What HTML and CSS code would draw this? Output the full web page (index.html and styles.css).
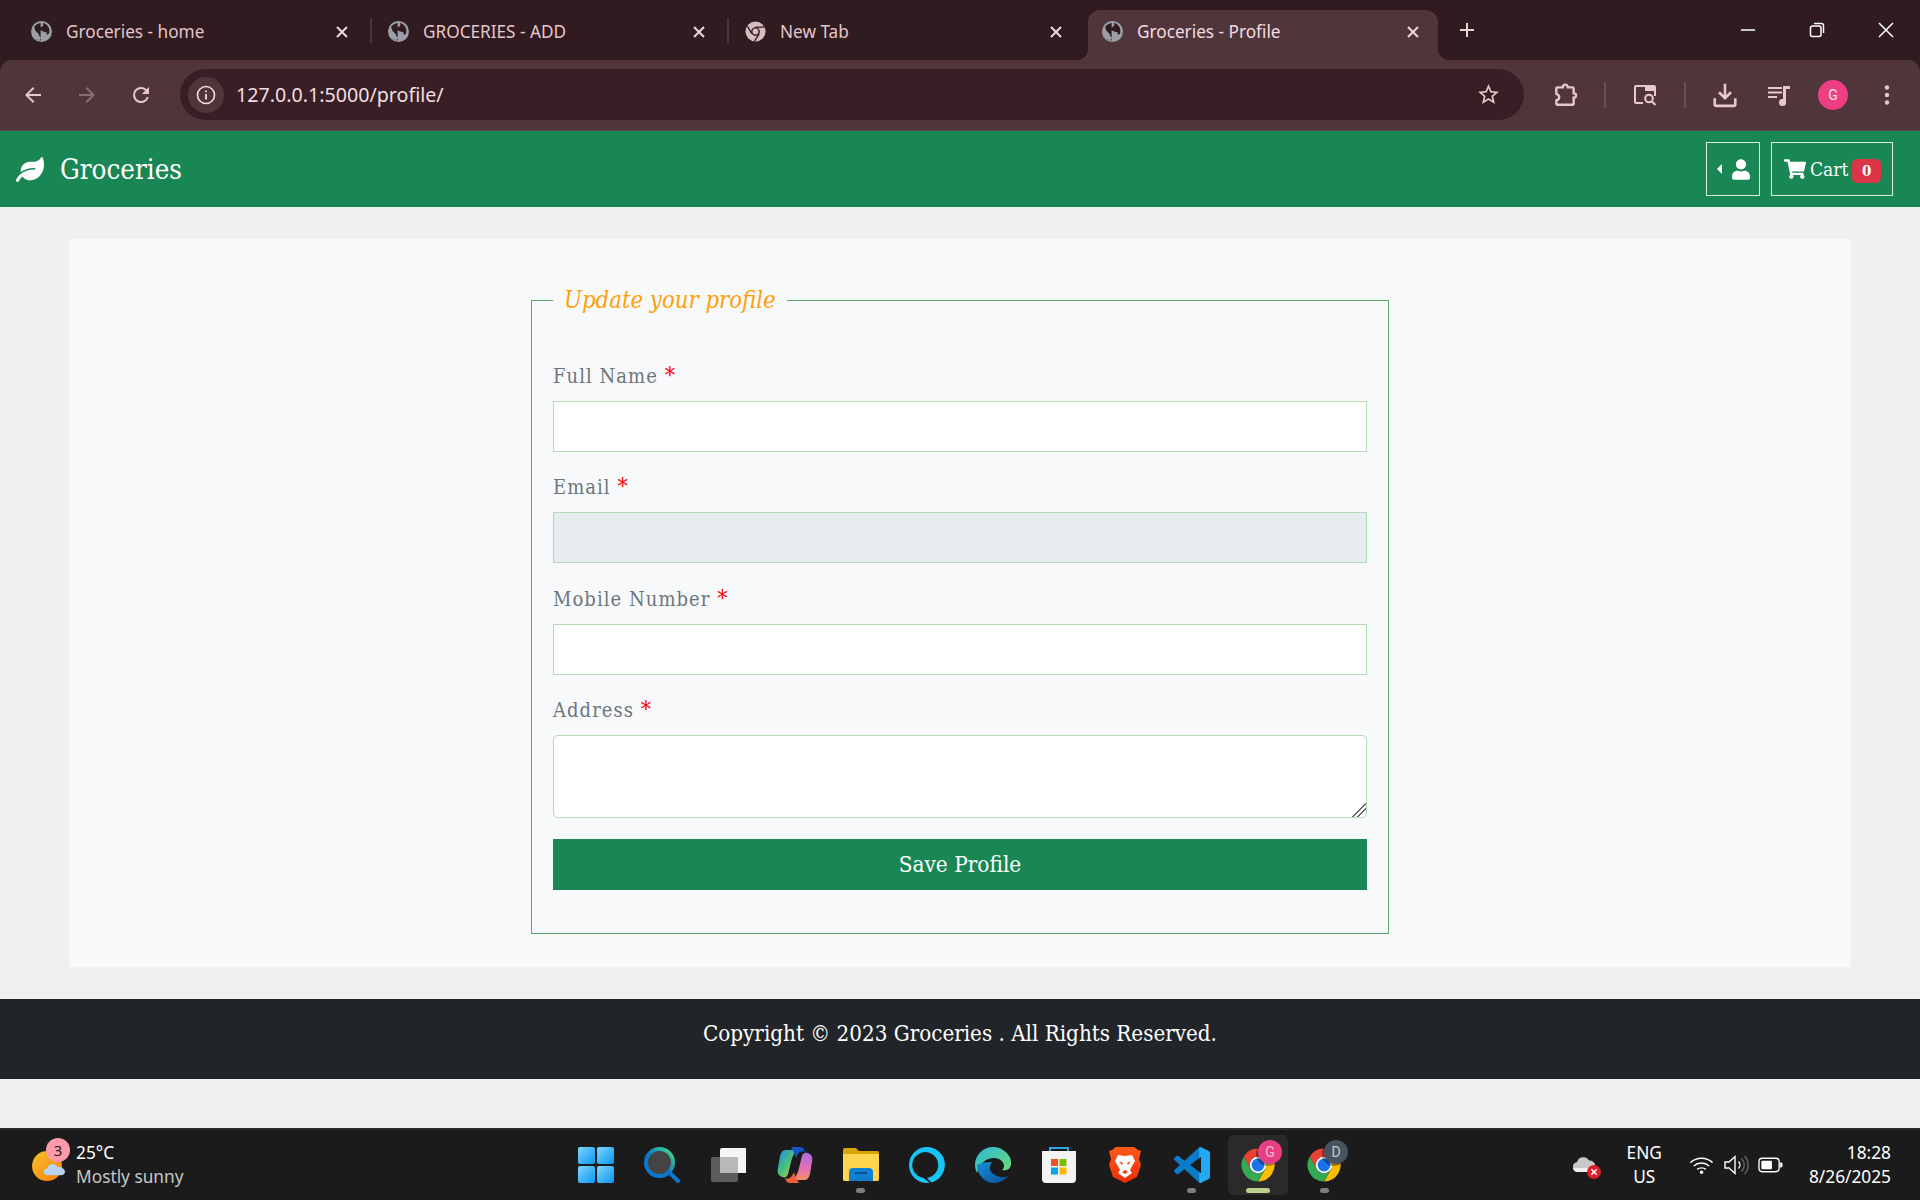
FILE: index.html
```html
<!DOCTYPE html>
<html lang="en">
<head>
<meta charset="utf-8">
<title>Groceries - Profile</title>
<link rel="stylesheet" href="styles.css">
</head>
<body>
<svg class="defs" aria-hidden="true">
  <defs>
    <symbol id="globe" viewBox="0 0 24 24">
      <circle cx="12" cy="12" r="12" fill="#9aa0a6"/>
      <path d="M11 2.200C8 2.600 5.200 4.200 3.600 6.600L5 11l4 4v1.500l2 2.500 .5 3c-4.500 0-7-2-7-2 4 3.500 6.500 .5 6.500 .5zM14 2.500v3l-3 2v3l3 1.500 4 1v3l2.500-1.500c1.500-4.500 0-10-6.500-12.500z" fill="#2f1b20"/>
    </symbol>
    <symbol id="close" viewBox="0 0 12 12"><path d="M1 1l10 10M11 1L1 11" stroke="#f0d8dc" stroke-width="2"/></symbol>
    <symbol id="chrome" viewBox="0 0 24 24">
      <path d="M2.470 6.500A11 11 0 0 1 21.530 6.500H12A5.500 5.500 0 0 0 7.240 14.750Z" fill="#ea4335"/>
      <path d="M21.530 6.500A11 11 0 0 1 12 23L16.760 14.750A5.500 5.500 0 0 0 12 6.500Z" fill="#fbbc04"/>
      <path d="M12 23A11 11 0 0 1 2.470 6.500L7.240 14.750A5.500 5.500 0 0 0 16.760 14.750Z" fill="#34a853"/>
      <circle cx="12" cy="12" r="5.500" fill="#fff"/>
      <circle cx="12" cy="12" r="4.300" fill="#1a73e8"/>
    </symbol>
    <linearGradient id="winGrad" x1="0" y1="0" x2="1" y2="1"><stop offset="0" stop-color="#7fd6ff"/><stop offset="1" stop-color="#0a96f0"/></linearGradient>
    <linearGradient id="searchGrad" x1="0" y1="1" x2="1" y2="0"><stop offset=".45" stop-color="#0a78d0"/><stop offset=".8" stop-color="#2fb9a0"/><stop offset="1" stop-color="#6fe07a"/></linearGradient>
    <linearGradient id="coA" x1="0" y1="0" x2="1" y2="1"><stop offset="0" stop-color="#1c8cf0"/><stop offset=".5" stop-color="#4bc27a"/><stop offset="1" stop-color="#f7c92e"/></linearGradient>
    <linearGradient id="coB" x1="0" y1="0" x2="0" y2="1"><stop offset="0" stop-color="#b06be0"/><stop offset=".6" stop-color="#e56fb0"/><stop offset="1" stop-color="#f59060"/></linearGradient>
    <linearGradient id="edgeA" x1="0" y1="0" x2="1" y2="1"><stop offset="0" stop-color="#29b8e0"/><stop offset="1" stop-color="#6fdc6a"/></linearGradient>
    <linearGradient id="edgeB" x1="0" y1="0" x2="1" y2="1"><stop offset="0" stop-color="#1690d8"/><stop offset="1" stop-color="#0a4f96"/></linearGradient>
    <linearGradient id="vs" x1="0" y1="0" x2="1" y2="0"><stop offset=".7" stop-color="#0a7bc8"/><stop offset=".71" stop-color="#23a8f2"/></linearGradient>
    <linearGradient id="sun" x1="0" y1="0" x2="1" y2="1"><stop offset="0" stop-color="#f5c42c"/><stop offset="1" stop-color="#f97a08"/></linearGradient>
    <linearGradient id="brave" x1="0" y1="0" x2="0" y2="1"><stop offset="0" stop-color="#ff5a1a"/><stop offset="1" stop-color="#f02c06"/></linearGradient>
  </defs>
</svg>

<div class="browser">
  <div class="tabstrip">
    <div class="tab sep">
      <svg class="favicon"><use href="#globe"/></svg>
      <span class="tab-title">Groceries - home</span>
      <svg class="tab-close"><use href="#close"/></svg>
    </div>
    <div class="tab sep">
      <svg class="favicon"><use href="#globe"/></svg>
      <span class="tab-title">GROCERIES - ADD</span>
      <svg class="tab-close"><use href="#close"/></svg>
    </div>
    <div class="tab">
      <svg class="favicon" viewBox="0 0 24 24"><circle cx="12" cy="12" r="11.500" fill="#d9bcc2"/><circle cx="12" cy="12" r="5" fill="#2f1b20"/><circle cx="12" cy="12" r="3.400" fill="#d9bcc2"/><path d="M12 7h10M7.700 14.500L2.800 6M16.300 14.500L11 23" stroke="#2f1b20" stroke-width="1.500"/></svg>
      <span class="tab-title">New Tab</span>
      <svg class="tab-close"><use href="#close"/></svg>
    </div>
    <div class="tab active">
      <svg class="favicon"><use href="#globe"/></svg>
      <span class="tab-title">Groceries - Profile</span>
      <svg class="tab-close"><use href="#close"/></svg>
    </div>
    <svg class="newtab" viewBox="0 0 16 16"><path d="M8 1v14M1 8h14" stroke="#ecd0d5" stroke-width="2"/></svg>
    <div class="winctl">
      <svg class="winbtn" viewBox="0 0 16 16"><path d="M1 8h14" stroke="#fff" stroke-width="1.500"/></svg>
      <svg class="winbtn" viewBox="0 0 16 16"><rect x="1.500" y="4" width="10.500" height="10.500" rx="2" fill="none" stroke="#fff" stroke-width="1.500"/><path d="M5 1.500h7.500a2 2 0 0 1 2 2V11" fill="none" stroke="#fff" stroke-width="1.500"/></svg>
      <svg class="winbtn" viewBox="0 0 16 16"><path d="M1 1l14 14M15 1L1 15" stroke="#fff" stroke-width="1.500"/></svg>
    </div>
  </div>

  <div class="toolbar">
    <button class="tool" type="button"><svg class="ticon" viewBox="0 0 24 24"><path d="M20 11H7.830l5.590-5.590L12 4l-8 8 8 8 1.410-1.410L7.830 13H20z"/></svg></button>
    <button class="tool dim" type="button"><svg class="ticon" viewBox="0 0 24 24"><path d="M12 4l-1.410 1.410L16.170 11H4v2h12.170l-5.580 5.590L12 20l8-8z"/></svg></button>
    <button class="tool" type="button"><svg class="ticon" viewBox="0 0 24 24"><path d="M17.650 6.350A7.960 7.960 0 0 0 12 4a8 8 0 1 0 7.750 10h-2.080A6 6 0 1 1 12 6c1.660 0 3.140.69 4.220 1.780L13 11h7V4l-2.350 2.350z"/></svg></button>
    <div class="omnibox">
      <span class="site-info"><svg class="info" viewBox="0 0 20 20"><circle cx="10" cy="10" r="8.500" fill="none" stroke="#f3dde1" stroke-width="1.600"/><path d="M10 9v5.500M10 5.500v1.800" stroke="#f3dde1" stroke-width="1.800"/></svg></span>
      <span class="url">127.0.0.1:5000/profile/</span>
      <svg class="star" viewBox="0 0 24 24"><path d="M22 9.240l-7.190-.62L12 2 9.190 8.630 2 9.240l5.460 4.730L5.820 21 12 17.270 18.180 21l-1.630-7.030L22 9.240zM12 15.400l-3.760 2.270 1-4.280-3.320-2.880 4.380-.38L12 6.100l1.710 4.040 4.380.38-3.320 2.880 1 4.280L12 15.400z"/></svg>
    </div>
    <div class="tool first"><svg class="ticon big" viewBox="0 0 24 24"><path d="M5 5h5c0-3.500 4.500-3.500 4.500 0H19a1 1 0 0 1 1 1v4.500c3-.5 3 4.500 0 4V20a1 1 0 0 1-1 1H5a1 1 0 0 1-1-1v-3c3.500-1 3.500-5 0-6V6a1 1 0 0 1 1-1z" fill="none" stroke="#e8c7cd" stroke-width="2.200"/></svg></div>
    <span class="tsep"></span>
    <div class="tool"><svg class="ticon big" viewBox="0 0 26 24"><path d="M14 3H4a1 1 0 0 0-1 1v15a1 1 0 0 0 1 1h7" fill="none" stroke="#e8c7cd" stroke-width="2"/><path d="M13 2h9a2 2 0 0 1 2 2v4H13z"/><path d="M14 4h9M23 8v5" stroke="#e8c7cd" stroke-width="2"/><circle cx="17" cy="15.500" r="3.800" fill="none" stroke="#e8c7cd" stroke-width="2"/><path d="M20 18.500l3.500 3.500" stroke="#e8c7cd" stroke-width="2"/></svg></div>
    <span class="tsep"></span>
    <div class="tool"><svg class="ticon big" viewBox="0 0 24 24"><path d="M12 1.500v13M6.500 9.500L12 15l5.500-5.500" fill="none" stroke="#e8c7cd" stroke-width="2.400"/><path d="M2.500 15v5.500a1.500 1.500 0 0 0 1.500 1.500h16a1.500 1.500 0 0 0 1.500-1.500V15" fill="none" stroke="#e8c7cd" stroke-width="2.400"/></svg></div>
    <div class="tool"><svg class="ticon" viewBox="0 0 24 24"><path d="M1 4h14v2H1zM1 8.500h14v2H1zM1 13h9v2H1z"/><path d="M16 3h7v3h-4v13.500a3.500 3.500 0 1 1-3-3.400z"/></svg></div>
    <div class="tool"><span class="avatar">G</span></div>
    <div class="tool"><svg class="ticon" viewBox="0 0 24 24"><circle cx="12" cy="4.500" r="2.200"/><circle cx="12" cy="12" r="2.200"/><circle cx="12" cy="19.500" r="2.200"/></svg></div>
  </div>
</div>

<nav class="navbar">
  <a class="brand">
    <svg class="leaf" viewBox="0 0 576 512"><path d="M546.2 9.7c-5.600-12.500-21.600-13-28.300-1.200C486.900 62.400 431.400 96 368 96h-80C182 96 96 182 96 288c0 7 .8 13.700 1.500 20.500C161.300 262.800 253.400 224 384 224c8.800 0 16 7.200 16 16s-7.200 16-16 16C132.600 256 26 410.100 2.400 468c-6.600 16.300 1.200 34.900 17.500 41.600 16.400 6.800 35-1.100 41.800-17.300 1.500-3.600 20.900-47.900 71.900-90.600 32.400 43.900 94 85.800 174.900 77.200C465.500 467.500 576 326.700 576 154.300c0-50.200-10.800-102.200-29.800-144.600z"/></svg>
    <span>Groceries</span>
  </a>
  <div class="nav-actions">
    <button class="nav-btn user" type="button">
      <span class="caret"></span>
      <svg class="user-ico" viewBox="0 0 448 512"><path d="M224 256c70.700 0 128-57.300 128-128S294.700 0 224 0 96 57.300 96 128s57.300 128 128 128zm89.600 32h-16.700c-22.200 10.200-46.900 16-72.900 16s-50.600-5.800-72.900-16h-16.700C60.200 288 0 348.200 0 422.400V464c0 26.500 21.500 48 48 48h352c26.500 0 48-21.500 48-48v-41.600c0-74.200-60.200-134.400-134.400-134.400z"/></svg>
    </button>
    <button class="nav-btn cart" type="button">
      <svg class="cart-ico" viewBox="0 0 576 512"><path d="M528.120 301.319l47.273-208C578.806 78.301 567.391 64 551.990 64H159.208l-9.166-44.810C147.758 8.021 137.930 0 126.529 0H24C10.745 0 0 10.745 0 24v16c0 13.255 10.745 24 24 24h69.883l70.248 343.435C147.325 417.100 136 435.222 136 456c0 30.928 25.072 56 56 56s56-25.072 56-56c0-15.674-6.447-29.835-16.824-40h209.647C430.447 426.165 424 440.326 424 456c0 30.928 25.072 56 56 56s56-25.072 56-56c0-22.172-12.888-41.332-31.579-50.405l5.517-24.276c3.413-15.018-8.002-29.319-23.403-29.319H218.117l-6.545-32h293.145c11.206 0 20.920-7.754 23.403-18.681z"/></svg>
      <span class="cart-label">Cart</span>
      <span class="badge">0</span>
    </button>
  </div>
</nav>

<main class="page">
  <section class="card">
    <form class="profile-form">
      <fieldset class="fieldset">
        <legend class="legend">Update your profile</legend>
        <div class="group">
          <label class="label">Full Name <span class="req">*</span></label>
          <input class="input" type="text">
        </div>
        <div class="group">
          <label class="label">Email <span class="req">*</span></label>
          <input class="input" type="text" disabled>
        </div>
        <div class="group">
          <label class="label">Mobile Number <span class="req">*</span></label>
          <input class="input" type="text">
        </div>
        <div class="group">
          <label class="label">Address <span class="req">*</span></label>
          <textarea class="input area"></textarea>
        </div>
        <button class="save" type="button">Save Profile</button>
      </fieldset>
    </form>
  </section>
</main>

<footer class="footer">Copyright © 2023 Groceries . All Rights Reserved.</footer>

<div class="taskbar">
  <div class="weather">
    <span class="weather-icon">
      <svg class="sun" viewBox="0 0 34 32"><circle cx="15.500" cy="15.500" r="15.500" fill="url(#sun)"/><path d="M16 25a3.500 3.500 0 0 1-.5-7 6 6 0 0 1 11-1.500c4-.5 7.500 2 7.500 5 0 2-1.500 3.500-4 3.500z" fill="#b9d3f5"/></svg>
      <span class="notif">3</span>
    </span>
    <div class="two-line">
      <span class="temp">25°C</span>
      <span class="cond">Mostly sunny</span>
    </div>
  </div>

  <div class="apps">
    <div class="app"><svg class="app-ico" viewBox="0 0 36 36"><rect x="0" y="0" width="17" height="17" rx="2" fill="url(#winGrad)"/><rect x="19" y="0" width="17" height="17" rx="2" fill="url(#winGrad)"/><rect x="0" y="19" width="17" height="17" rx="2" fill="url(#winGrad)"/><rect x="19" y="19" width="17" height="17" rx="2" fill="url(#winGrad)"/></svg></div>
    <div class="app"><svg class="app-ico" viewBox="0 0 36 36"><circle cx="15.500" cy="15.500" r="13.500" fill="#444" stroke="url(#searchGrad)" stroke-width="4"/><path d="M25 25l9 9" stroke="#0a78d0" stroke-width="4" stroke-linecap="round"/></svg></div>
    <div class="app"><svg class="app-ico" viewBox="0 0 36 36"><rect x="1" y="10" width="27" height="25" rx="2" fill="#5c5c5c"/><rect x="10" y="1" width="27" height="25" rx="2" fill="#f4f4f4"/><rect x="10" y="10" width="18" height="16" fill="#b9b9b9"/></svg></div>
    <div class="app"><svg class="app-ico" viewBox="0 0 36 36"><path d="M8 3h13c-3 1-5 5-7 12l-3 12c-1 3-3 4-6 3-4-2-5-4-4-9l2-12c1-4 3-6 5-6z" fill="url(#coA)"/><path d="M28 33H15c3-1 5-5 7-12l3-12c1-3 3-4 6-3 4 2 5 4 4 9l-2 12c-1 4-3 6-5 6z" fill="url(#coB)"/><path d="M14 0h9c3 0 4 2 5 5-4-2-7 1-9 6-1-4-3-8-5-11z" fill="#1358c8"/><path d="M22 36h-9c-3 0-4-2-5-5 4 2 7-1 9-6 1 4 3 8 5 11z" fill="#f0603c"/></svg></div>
    <div class="app running"><svg class="app-ico" viewBox="0 0 36 36"><path d="M0 3a2 2 0 0 1 2-2h11l3 3h18a2 2 0 0 1 2 2v26a2 2 0 0 1-2 2H2a2 2 0 0 1-2-2z" fill="#d9a406"/><path d="M0 7h36v25a2 2 0 0 1-2 2H2a2 2 0 0 1-2-2z" fill="#ffd44f"/><path d="M6 34V25a4 4 0 0 1 4-4h16a4 4 0 0 1 4 4v9z" fill="#0f7fd0"/><path d="M12 26h12" stroke="#0a4f96" stroke-width="2"/></svg></div>
    <div class="app"><svg class="app-ico" viewBox="0 0 36 36"><path d="M18 0a18 18 0 1 0 0 36c1 0 1.500-.1 2.500-.2L14.500 31A13 13 0 1 1 18 31l4.500 4.400A18 18 0 0 0 18 0z" fill="#17c5f4"/></svg></div>
    <div class="app"><svg class="app-ico" viewBox="0 0 36 36"><path d="M18 0C8 0 0 8 0 18c0 3 1 6 2 8 2-9 9-15 17-15 6 0 10 4 10 8 0 2-1 3-2 4 3 1 8 0 9-5v-3C36 8 28 0 18 0z" fill="url(#edgeA)"/><path d="M2 18c0 10 8 18 17 18 6 0 11-3 14-7-2 1-8 2-13-1-5-2-7-8-3-13-6 0-13 1-15 3z" fill="url(#edgeB)"/></svg></div>
    <div class="app"><svg class="app-ico" viewBox="0 0 36 36"><path d="M9 6V1h18v5" fill="none" stroke="#2aa9ea" stroke-width="2"/><path d="M1 4h34v28a4 4 0 0 1-4 4H5a4 4 0 0 1-4-4z" fill="#f3f3f3"/><rect x="10" y="12" width="7" height="7" fill="#f25022"/><rect x="18.500" y="12" width="7" height="7" fill="#7fba00"/><rect x="10" y="20.500" width="7" height="7" fill="#00a4ef"/><rect x="18.500" y="20.500" width="7" height="7" fill="#ffb900"/></svg></div>
    <div class="app"><svg class="app-ico" viewBox="0 0 36 36"><path d="M9 0h18l4 3 3 1-2 8 2 6-4 12-12 6-12-6-4-12 2-6-2-8 3-1z" fill="url(#brave)"/><path d="M11 8l7 1 7-1 3 6-3 5-2 4 2 3-7 5-7-5 2-3-2-4-3-5z" fill="#fff"/><path d="M12 14l4 2-1 2zM24 14l-4 2 1 2zM15 25l3-2 3 2-3 2z" fill="#f03a0a"/></svg></div>
    <div class="app running"><svg class="app-ico" viewBox="0 0 24 24"><path fill="url(#vs)" d="M23.150 2.587L18.210.21a1.494 1.494 0 0 0-1.705.29l-9.460 8.630-4.120-3.128a.999.999 0 0 0-1.276.057L.327 7.261A1 1 0 0 0 .326 8.740L3.899 12 .326 15.260a1 1 0 0 0 .001 1.479L1.650 17.940a.999.999 0 0 0 1.276.057l4.120-3.128 9.460 8.630a1.492 1.492 0 0 0 1.704.29l4.942-2.377A1.500 1.500 0 0 0 24 20.060V3.939a1.500 1.500 0 0 0-.85-1.352zm-5.146 14.861L10.826 12l7.178-5.448v10.896z"/></svg></div>
    <div class="app active-app"><svg class="app-ico"><use href="#chrome"/></svg><span class="profile pink">G</span></div>
    <div class="app running"><svg class="app-ico"><use href="#chrome"/></svg><span class="profile slate">D</span></div>
  </div>

  <div class="tray">
    <span class="cloud">
      <svg class="cloud-ico" viewBox="0 0 24 24"><path d="M6 19a5 5 0 0 1-1-9.900A6.500 6.500 0 0 1 17 7.500 5.500 5.500 0 0 1 18 19z" fill="#c9c9c9"/><path d="M1 15h20v4H6a5 5 0 0 1-5-4z" fill="#f1f1f1"/></svg>
      <svg class="err" viewBox="0 0 14 14"><circle cx="7" cy="7" r="7" fill="#d9202c"/><path d="M4.300 4.300l5.400 5.400M9.700 4.300l-5.400 5.400" stroke="#fff" stroke-width="1.600"/></svg>
    </span>
    <div class="two-line lang"><span>ENG</span><span>US</span></div>
    <svg class="sys wifi" viewBox="0 0 26 20"><path d="M1.500 7.500c6.500-6 16.500-6 23 0M5 11c4.500-4 11.500-4 16 0M8.500 14.500c2.500-2 6.500-2 9 0" fill="none" stroke="#fff" stroke-width="1.500"/><circle cx="13" cy="17.500" r="1.800" fill="#fff"/></svg>
    <svg class="sys vol" viewBox="0 0 26 22"><path d="M1 8h4l6-5.500v17L5 14H1z" fill="none" stroke="#fff" stroke-width="1.400"/><path d="M14.500 7.500a5 5 0 0 1 0 7" fill="none" stroke="#fff" stroke-width="1.400"/><path d="M17.500 4.500a9 9 0 0 1 0 13M20.500 2a13 13 0 0 1 0 18" fill="none" stroke="#666" stroke-width="1.400"/></svg>
    <svg class="sys batt" viewBox="0 0 26 18"><rect x="1" y="2" width="21" height="14" rx="3.500" fill="none" stroke="#fff" stroke-width="1.400"/><rect x="3.500" y="4.500" width="11" height="9" rx="1" fill="#fff"/><path d="M23 6.500h1a1.500 1.500 0 0 1 1.500 1.500v2a1.500 1.500 0 0 1-1.500 1.500h-1z" fill="#fff"/></svg>
    <div class="two-line clock"><span>18:28</span><span>8/26/2025</span></div>
  </div>
</div>
</body>
</html>
```

FILE: styles.css
```css
* { box-sizing: border-box; }
html, body { margin: 0; height: 1200px; overflow: hidden; }
body {
  position: relative;
  display: flex;
  flex-direction: column;
  background: #f0f0f0;
  font-family: "DejaVu Serif Condensed", "DejaVu Serif", serif;
}
.defs { position: absolute; width: 0; height: 0; }

/* browser chrome */
.browser { font-family: "Noto Sans", "Open Sans", sans-serif; background: #2f1b20; }
.tabstrip { display: flex; height: 60px; padding: 10px 0 0 17px; color: #e6c6cc; }
.tab {
  position: relative;
  flex: none;
  display: flex;
  align-items: center;
  width: 350px;
  margin-right: 7px;
  padding: 0 19px 7px 14px;
  font-size: 17.2px;
  border-radius: 12px 12px 0 0;
}
.tab.sep::after {
  content: "";
  position: absolute;
  right: -5px;
  top: 8px;
  width: 2px;
  height: 25px;
  background: #4f353b;
}
.tab.active { background: #50353b; color: #f3dde1; margin-right: 0; }
.tab.active::before,
.tab.active::after {
  content: "";
  position: absolute;
  bottom: 0;
  width: 12px;
  height: 12px;
}
.tab.active::before { left: -12px; background: radial-gradient(circle at 0 0, transparent 12px, #50353b 12.5px); }
.tab.active::after { right: -12px; background: radial-gradient(circle at 100% 0, transparent 12px, #50353b 12.5px); }
.favicon { flex: none; width: 21px; height: 21px; }
.tab-title { flex: 1; margin-left: 14px; white-space: nowrap; }
.tab-close { flex: none; width: 12px; height: 12px; }
.newtab { flex: none; width: 16px; height: 16px; margin: 12px 0 0 21px; }
.winctl { display: flex; margin-left: auto; align-items: flex-start; padding: 12px 26px 0 0; gap: 53px; }
.winbtn { width: 16px; height: 16px; display: block; }

.toolbar {
  display: flex;
  align-items: center;
  height: 71px;
  padding: 0 0 1px 6px;
  background: #50353b;
  border-bottom: 1px solid #5f444a;
  border-radius: 12px 12px 0 0;
}
.tool {
  flex: none;
  display: flex;
  align-items: center;
  justify-content: center;
  width: 54px;
  height: 40px;
  padding: 0;
  background: none;
  border: 0;
}
.tool.first { margin-left: 14px; }
.ticon { width: 24px; height: 24px; fill: #e8c7cd; }
.ticon.big { width: 26px; height: 26px; }
.tool.dim .ticon { fill: #8a6d73; }
.tsep { flex: none; width: 2px; height: 26px; margin: 0 12px 0 12px; background: #6b4f55; }
.omnibox {
  flex: none;
  display: flex;
  align-items: center;
  width: 1344px;
  height: 51px;
  margin-left: 12px;
  padding: 0 23px 0 8px;
  background: #371f25;
  border-radius: 26px;
}
.site-info {
  flex: none;
  display: flex;
  align-items: center;
  justify-content: center;
  width: 36px;
  height: 36px;
  border-radius: 50%;
  background: #50353b;
}
.info { width: 20px; height: 20px; }
.url { flex: 1; margin-left: 12px; font-size: 19.65px; color: #f3dde1; }
.star { width: 25px; height: 25px; fill: #e8c7cd; }
.avatar {
  display: flex;
  align-items: center;
  justify-content: center;
  width: 30px;
  height: 30px;
  border-radius: 50%;
  background: #ee3f84;
  color: #fde2ec;
  font: 14px Roboto, sans-serif;
}

/* navbar */
.navbar {
  flex: none;
  display: flex;
  align-items: center;
  justify-content: space-between;
  height: 76px;
  padding: 0 27px 0 16px;
  background: #198754;
  color: #fff;
}
.brand { display: flex; align-items: center; gap: 16px; font-size: 27.5px; }
.leaf { width: 28px; height: 25px; fill: #fff; }
.nav-actions { display: flex; gap: 11px; }
.nav-btn {
  display: flex;
  align-items: center;
  height: 54px;
  padding: 0;
  background: none;
  border: 1px solid #d9eee2;
  color: #fff;
  font: inherit;
}
.user { width: 54px; padding-left: 10px; gap: 10px; }
.caret { width: 0; height: 0; border: 5px solid transparent; border-left-width: 0; border-right-color: #fff; }
.user-ico { width: 18px; height: 21px; fill: #fff; }
.cart { width: 122px; padding-left: 12px; font-size: 19px; }
.cart-ico { width: 22px; height: 20px; fill: #fff; }
.cart-label { margin-left: 4px; }
.badge {
  display: flex;
  align-items: center;
  justify-content: center;
  width: 29px;
  height: 24px;
  margin: 3px 0 0 4px;
  border-radius: 5px;
  background: #dc3545;
  font-size: 15px;
  font-weight: 700;
}

/* page */
.page { flex: none; padding: 32px 69px; }
.card { padding: 46px 0 33px; background: #f8f9fa; }
.profile-form { width: 858px; margin: 0 auto; }
.fieldset {
  display: block;
  min-width: 0;
  margin: 0;
  padding: 42px 21px 43px;
  border: 1px solid #5aab6b;
}
.legend {
  margin: 0;
  padding: 0 11px;
  font-size: 23.7px;
  font-style: italic;
  line-height: 30px;
  color: #ffa00a;
}
.group { margin-bottom: 16.33px; }
.label {
  display: block;
  height: 44px;
  font-size: 20px;
  letter-spacing: 1.05px;
  line-height: 38px;
  color: #6c757d;
}
.req { color: #f00; font-size: 23px; line-height: 20px; }
.input {
  display: block;
  width: 100%;
  height: 51px;
  margin: 0;
  background: #fff;
  border: 1px solid #aedcb4;
  outline: 0;
}
.input:disabled { background: #e9ecef; }
.area { height: 83px; border-radius: 5px; resize: vertical; }
.area::-webkit-resizer {
  background: linear-gradient(135deg, transparent 50%, #666 50%, #666 58%, transparent 58%, transparent 68%, #666 68%, #666 76%, transparent 76%);
}
.group:last-of-type { margin-bottom: 21px; }
.save {
  display: block;
  width: 100%;
  height: 51px;
  padding: 0;
  background: #198754;
  border: 0;
  color: #fff;
  font: inherit;
  font-size: 22.4px;
}

.footer {
  flex: none;
  height: 80px;
  padding-top: 20px;
  background: #212529;
  color: #fff;
  font-size: 22.2px;
  line-height: 28px;
  text-align: center;
}

/* taskbar */
.taskbar {
  position: absolute;
  left: 0;
  right: 0;
  bottom: 0;
  display: grid;
  grid-template-columns: 1fr auto 1fr;
  align-items: center;
  height: 72px;
  background: #1b1b1b;
  border-top: 2px solid #2c2c2c;
  color: #fff;
  font-family: "Noto Sans", "Open Sans", sans-serif;
  font-size: 17.3px;
}
.two-line { display: flex; flex-direction: column; gap: 1px; line-height: 23px; margin-top: -1px; }
.weather { display: flex; align-items: center; padding-left: 32px; gap: 11px; }
.weather-icon { position: relative; display: block; width: 33px; height: 30px; margin-top: 2px; }
.sun { display: block; width: 33px; height: 31px; }
.notif {
  position: absolute;
  left: 14px;
  top: -13px;
  width: 24px;
  height: 24px;
  border-radius: 50%;
  background: #ff9aa8;
  color: #1b1b1b;
  font-size: 15px;
  line-height: 24px;
  text-align: center;
}
.cond { color: #c8c8c8; }
.apps { display: flex; }
.app {
  position: relative;
  display: flex;
  align-items: center;
  justify-content: center;
  width: 66.2px;
  height: 60px;
}
.app-ico { width: 36px; height: 36px; display: block; }
.app.running::after,
.active-app::after {
  content: "";
  position: absolute;
  left: 50%;
  bottom: 2px;
  width: 9px;
  height: 5px;
  margin-left: -4.5px;
  border-radius: 3px;
  background: #7f7f7f;
}
.active-app::before {
  content: "";
  position: absolute;
  left: 3px;
  top: 0;
  width: 60px;
  height: 60px;
  border-radius: 6px;
  background: #2a2a2a;
}
.active-app .app-ico { position: relative; }
.active-app::after { width: 24px; margin-left: -12px; background: #bcd08c; }
.profile {
  position: absolute;
  top: 5px;
  right: 9px;
  width: 24px;
  height: 24px;
  border-radius: 50%;
  box-shadow: -2px 2px 0 rgba(0, 0, 0, .35);
  font: 14px/24px Roboto, sans-serif;
  text-align: center;
  color: #e4e4e4;
}
.pink { background: #e83e83; color: #f6bcd2; }
.slate { background: #48535e; color: #c2c9d0; }
.tray { display: flex; align-items: center; justify-self: end; padding-right: 29px; }
.cloud { position: relative; display: block; width: 24px; height: 24px; margin-right: 31px; }
.cloud-ico { width: 24px; height: 24px; display: block; }
.err { position: absolute; right: -5px; bottom: -2px; width: 14px; height: 14px; }
.lang { align-items: center; margin-right: 27px; }
.sys { flex: none; display: block; }
.wifi { width: 25px; height: 20px; margin-right: 10px; }
.vol { width: 26px; height: 22px; margin-right: 8px; }
.batt { width: 25px; height: 18px; margin-right: 26px; }
.clock { align-items: flex-end; }
```
